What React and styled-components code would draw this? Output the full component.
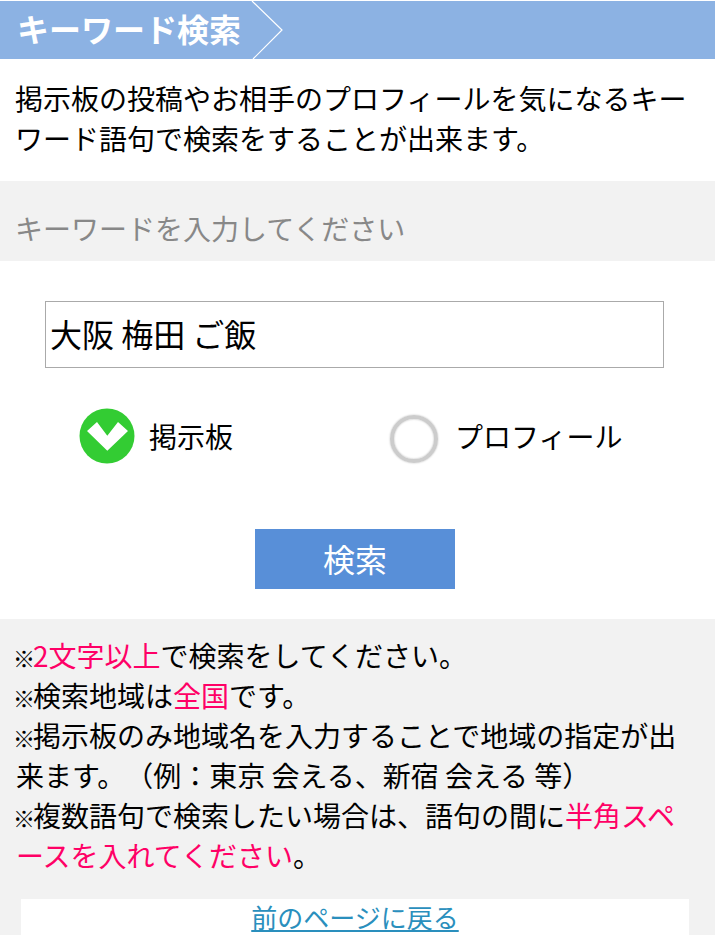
import React from 'react';
import styled, { createGlobalStyle } from 'styled-components';

const GlobalStyle = createGlobalStyle`
  html, body {
    margin: 0;
    padding: 0;
    background: #fff;
    font-family: "Noto Sans CJK JP", "Liberation Sans", sans-serif;
    color: #000;
    text-spacing-trim: space-all;
  }
`;

const Page = styled.div`
  width: 715px;
  height: 935px;
  overflow: hidden;
  padding-top: 1px;
  box-sizing: border-box;
`;

const TitleBar = styled.h1`
  position: relative;
  margin: 0;
  height: 58px;
  padding-left: 17px;
  background: #8cb2e3;
  color: #fff;
  font-size: 32px;
  font-weight: 700;
  line-height: 54px;
`;

const TitleArrow = styled.svg`
  position: absolute;
  left: 250px;
  top: 0;
`;

const Intro = styled.p`
  margin: 0;
  padding: 19px 15px 23px;
  font-size: 28px;
  line-height: 40px;
  font-weight: 400;
`;

const PromptBar = styled.div`
  height: 80px;
  padding-left: 15px;
  background: #f2f2f2;
  color: #888;
  font-size: 28px;
  line-height: 94px;
`;

const Form = styled.div`
  display: flex;
  flex-direction: column;
  height: 358px;
  padding: 40px 5px 0 0;
  box-sizing: border-box;
`;

const KeywordInput = styled.input`
  align-self: flex-start;
  width: 619px;
  height: 67px;
  margin-left: 45px;
  padding: 0 4px 3px;
  box-sizing: border-box;
  border: 1px solid #aaa;
  border-radius: 0;
  background: #fff;
  color: #000;
  font-family: inherit;
  font-size: 32px;
`;

const Options = styled.div`
  display: flex;
  margin-top: 40px;
  height: 56px;
  align-items: center;
`;

const Option = styled.label`
  display: flex;
  align-items: center;
  gap: ${props => props.$gap}px;
  margin-left: ${props => props.$left}px;
  font-size: 28px;
`;

const RadioOff = styled.span`
  width: 48px;
  height: 48px;
  margin-top: 6px;
  box-sizing: border-box;
  border: 4px solid #ccc;
  border-radius: 50%;
  box-shadow: 0 0 2px #bbb, inset 0 0 2px #bbb;
`;

const SearchButton = styled.button`
  align-self: center;
  width: 200px;
  height: 60px;
  margin-top: 65px;
  padding: 0 0 3px;
  border: none;
  background: #588fd8;
  color: #fff;
  font-family: inherit;
  font-size: 32px;
`;

const Notes = styled.div`
  height: 316px;
  padding: 16px 16px 0;
  box-sizing: border-box;
  background: #f2f2f2;
`;

const NoteText = styled.p`
  margin: 0;
  font-size: 28px;
  line-height: 40px;
`;

const Mark = styled.span`
  margin-left: -3px;
  font-size: 22px;
  font-weight: 500;
  line-height: 1;
  letter-spacing: -2px;
`;

const Hot = styled.span`
  color: #ff0066;
`;

const BackBox = styled.div`
  margin: 24px 0 0 5px;
  width: 668px;
  height: 60px;
  background: #fff;
  text-align: center;
  font-size: 26px;
  line-height: 36px;
`;

const BackLink = styled.a`
  color: #2a8fbd;
  text-decoration: underline;
`;

const CheckIcon = () => (
  <svg width="56" height="56" viewBox="0 0 56 56">
    <circle cx="28" cy="28" r="27.5" fill="#33cc33" />
    <path d="M8 23 L18 14 L28.3 27.7 L39 14 L49 23 L28.3 42.7 Z" fill="#fff" />
  </svg>
);

export default function App() {
  return (
    <Page>
      <GlobalStyle />
      <TitleBar>
        キーワード検索
        <TitleArrow width="36" height="58" viewBox="0 0 36 58">
          <path d="M2 0 L32 29 L3 58" fill="none" stroke="#fff" strokeWidth="1.2" />
        </TitleArrow>
      </TitleBar>
      <Intro>掲示板の投稿やお相手のプロフィールを気になるキーワード語句で検索をすることが出来ます。</Intro>
      <PromptBar>キーワードを入力してください</PromptBar>
      <Form>
        <KeywordInput defaultValue="大阪 梅田 ご飯" />
        <Options>
          <Option $gap={14} $left={79}>
            <CheckIcon />
            掲示板
          </Option>
          <Option $gap={17} $left={157}>
            <RadioOff />
            プロフィール
          </Option>
        </Options>
        <SearchButton>検索</SearchButton>
      </Form>
      <Notes>
        <NoteText>
          <Mark>※</Mark><Hot>2文字以上</Hot>で検索をしてください。<br />
          <Mark>※</Mark>検索地域は<Hot>全国</Hot>です。<br />
          <Mark>※</Mark>掲示板のみ地域名を入力することで地域の指定が出来ます。（例：東京 会える、新宿 会える 等）<br />
          <Mark>※</Mark>複数語句で検索したい場合は、語句の間に<Hot>半角スペースを入れてください</Hot>。
        </NoteText>
        <BackBox>
          <BackLink href="#back">前のページに戻る</BackLink>
        </BackBox>
      </Notes>
    </Page>
  );
}
